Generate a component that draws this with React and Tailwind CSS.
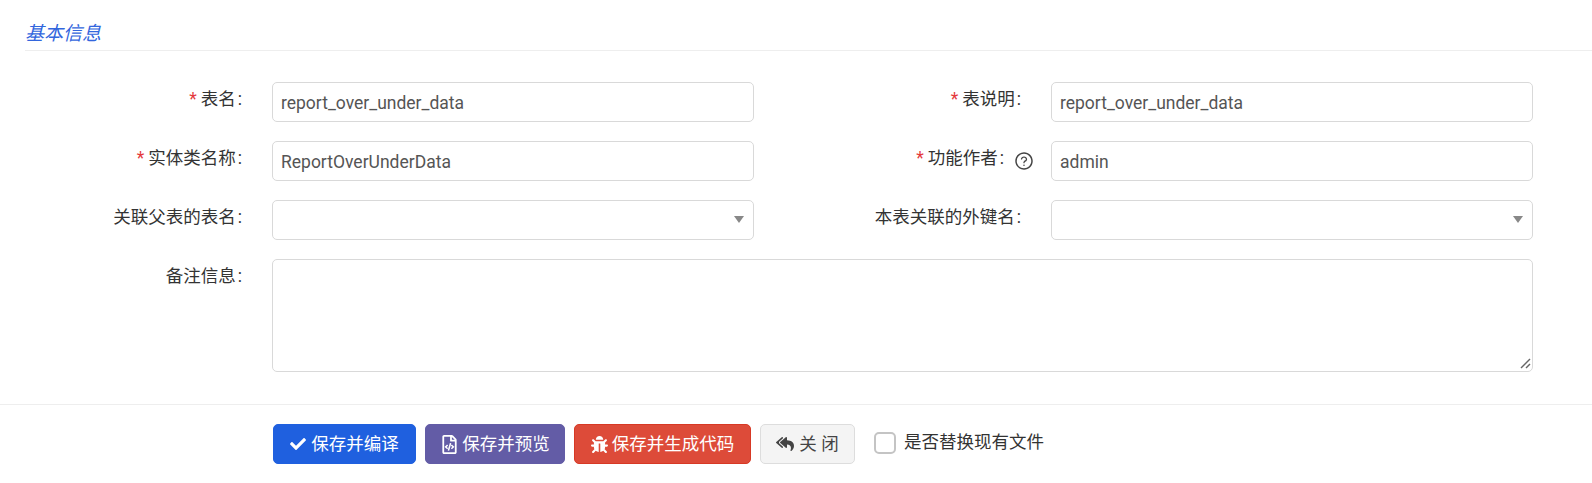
import React from 'react';
import { FaCheck, FaRegFileCode, FaBug, FaReplyAll } from 'react-icons/fa';
import { AiOutlineQuestionCircle } from 'react-icons/ai';

const font = "font-['Roboto','Noto_Sans_CJK_SC',sans-serif]";
const inputCls = 'block w-full h-[40px] px-[8px] pt-[2px] border border-[#d9d9d9] rounded-[5px] bg-white text-[17.5px] text-[#555] outline-none';

function Label({ text, required, help }) {
  return (
    <label className="flex items-center justify-end h-[40px] text-[17.5px] text-[#333] pb-[6px]">
      {required && <span className="text-[#e4393c] mr-[4px]">*</span>}
      <span>{text}</span>
      <span className="ml-[2px]">:</span>
      {help ? (
        <AiOutlineQuestionCircle className="ml-[10px] mr-[17px] mt-[5px] text-[#444] text-[20px]" />
      ) : (
        <span className="w-[30px]" />
      )}
    </label>
  );
}

function TextField({ value }) {
  return <input type="text" defaultValue={value} className={inputCls} />;
}

function SelectField() {
  return (
    <div className="relative">
      <select className={`${inputCls} appearance-none`}>
        <option></option>
      </select>
      <span className="absolute right-[10px] top-[16px] border-x-[5px] border-t-[7px] border-x-transparent border-t-[#888]" />
    </div>
  );
}

function Btn({ color, icon, children }) {
  return (
    <button className={`flex items-center justify-center h-[40px] rounded-[5px] text-[17.5px] border ${color}`}>
      {icon}
      {children}
    </button>
  );
}

export default function App() {
  return (
    <div className={`w-[1592px] h-[483px] bg-white overflow-hidden ${font}`}>
      <div className="ml-[25px] h-[51px] border-b border-[#eee] pt-[20px]">
        <span className="block text-[19px] leading-[28px] italic text-[#3366dd]">基本信息</span>
      </div>

      <div className="grid grid-cols-[272px_482px_297px_482px] gap-y-[19px] pt-[31px]">
        <Label text="表名" required />
        <TextField value="report_over_under_data" />
        <Label text="表说明" required />
        <TextField value="report_over_under_data" />

        <Label text="实体类名称" required />
        <TextField value="ReportOverUnderData" />
        <Label text="功能作者" required help />
        <TextField value="admin" />

        <Label text="关联父表的表名" />
        <SelectField />
        <Label text="本表关联的外键名" />
        <SelectField />

        <Label text="备注信息" />
        <div className="col-span-3 relative">
          <textarea className="block w-full h-[113px] px-[8px] py-[6px] border border-[#d9d9d9] rounded-[5px] text-[17.5px] text-[#555] outline-none resize-none" />
          <svg className="absolute right-[2px] bottom-[3px]" width="11" height="11" viewBox="0 0 11 11" fill="none" stroke="#666" strokeWidth="1.4">
            <path d="M1 10 L10 1" />
            <path d="M6 10 L10 6" />
          </svg>
        </div>
      </div>

      <div className="mt-[32px] border-t border-[#eee] pt-[19px] pl-[273px] flex items-center">
        <div className="w-[143px]">
          <Btn color="w-full bg-[#1f60df] border-[#1f60df] text-white" icon={<FaCheck className="text-[16px] mr-[5px]" />}>保存并编译</Btn>
        </div>
        <div className="w-[140px] ml-[9px]">
          <Btn color="w-full bg-[#635ca6] border-[#635ca6] text-white" icon={<FaRegFileCode className="text-[19px] mr-[3px]" />}>保存并预览</Btn>
        </div>
        <div className="w-[177px] ml-[9px]">
          <Btn color="w-full bg-[#dd4b39] border-[#d73925] text-white" icon={<FaBug className="text-[17px] mr-[4px]" />}>保存并生成代码</Btn>
        </div>
        <div className="w-[95px] ml-[9px]">
          <Btn color="w-full bg-[#f4f4f4] border-[#ddd] text-[#444]" icon={<FaReplyAll className="text-[18px] mr-[5px]" />}>关 闭</Btn>
        </div>
        <label className="flex items-center ml-[19px] text-[17.5px] text-[#333] pb-[3px]">
          <input type="checkbox" className="appearance-none w-[22px] h-[22px] rounded-[5px] border-2 border-[#c4c4c4] bg-white mr-[8px]" />
          是否替换现有文件
        </label>
      </div>
    </div>
  );
}
